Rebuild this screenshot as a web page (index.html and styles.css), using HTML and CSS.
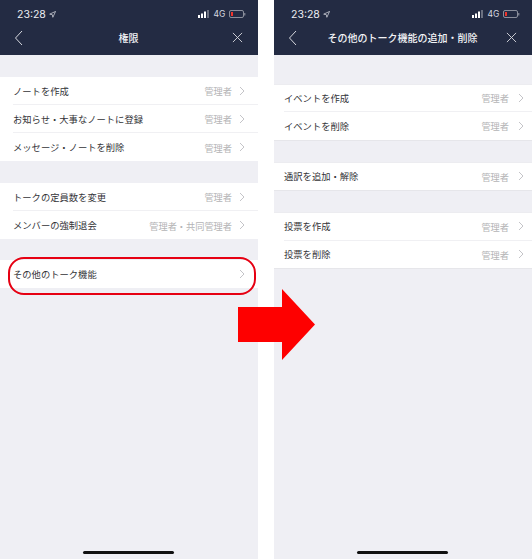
FILE: index.html
```html
<!DOCTYPE html>
<html lang="ja">
<head>
<meta charset="utf-8">
<title>権限</title>
<link rel="stylesheet" href="styles.css">
</head>
<body>
<svg width="0" height="0" class="defs">
  <defs>
    <symbol id="chev" viewBox="0 0 6 10"><path d="M1 1l4 4-4 4" fill="none" stroke="#c4c4c8" stroke-width="1"/></symbol>
    <symbol id="status" viewBox="0 0 48 10">
      <rect x="0" y="6" width="2" height="3" fill="#fff"/>
      <rect x="3" y="4.500" width="2" height="4.500" fill="#fff"/>
      <rect x="6" y="2.500" width="2" height="6.500" fill="#fff"/>
      <rect x="9" y="1" width="2" height="8" fill="#6b7080"/>
      <rect x="31.500" y="1.500" width="14" height="7" rx="1.500" fill="none" stroke="#a5a8b2" stroke-width=".8"/>
      <rect x="33" y="3" width="2" height="4" fill="#f0342c"/>
      <rect x="46.300" y="4" width="1" height="2.500" fill="#9a9da8"/>
    </symbol>
    <symbol id="back" viewBox="0 0 10 16"><path d="M8 1L1.500 8 8 15" fill="none" stroke="#d6d8de" stroke-width="1"/></symbol>
    <symbol id="close" viewBox="0 0 12 12"><path d="M1 1l10 10M11 1L1 11" fill="none" stroke="#d6d8de" stroke-width="1"/></symbol>
  </defs>
</svg>
<main class="stage">
  <section class="phone">
    <header class="top">
      <div class="status">
        <span class="time">23:28 <svg class="loc" viewBox="0 0 8 8"><path d="M7.500.5L.8 3.600l3 .6.6 3z" fill="none" stroke="#dfe1e6" stroke-width=".8"/></svg></span>
        <span class="net"><svg class="bars"><use href="#status"/></svg><span class="g4">4G</span></span>
      </div>
      <div class="nav">
        <svg class="back"><use href="#back"/></svg>
        <h1 class="title">権限</h1>
        <svg class="close"><use href="#close"/></svg>
      </div>
    </header>
    <div class="groups groups-a">
      <ul class="group">
        <li class="row"><span class="label">ノートを作成</span><span class="value">管理者</span><svg class="chev"><use href="#chev"/></svg></li>
        <li class="row"><span class="label">お知らせ・大事なノートに登録</span><span class="value">管理者</span><svg class="chev"><use href="#chev"/></svg></li>
        <li class="row"><span class="label">メッセージ・ノートを削除</span><span class="value">管理者</span><svg class="chev"><use href="#chev"/></svg></li>
      </ul>
      <ul class="group">
        <li class="row"><span class="label">トークの定員数を変更</span><span class="value">管理者</span><svg class="chev"><use href="#chev"/></svg></li>
        <li class="row"><span class="label">メンバーの強制退会</span><span class="value">管理者・共同管理者</span><svg class="chev"><use href="#chev"/></svg></li>
      </ul>
      <ul class="group">
        <li class="row"><span class="label">その他のトーク機能</span><svg class="chev"><use href="#chev"/></svg></li>
      </ul>
    </div>
    <div class="home"></div>
  </section>
  <section class="phone">
    <header class="top">
      <div class="status">
        <span class="time">23:28 <svg class="loc" viewBox="0 0 8 8"><path d="M7.500.5L.8 3.600l3 .6.6 3z" fill="none" stroke="#dfe1e6" stroke-width=".8"/></svg></span>
        <span class="net"><svg class="bars"><use href="#status"/></svg><span class="g4">4G</span></span>
      </div>
      <div class="nav">
        <svg class="back"><use href="#back"/></svg>
        <h1 class="title">その他のトーク機能の追加・削除</h1>
        <svg class="close"><use href="#close"/></svg>
      </div>
    </header>
    <div class="groups groups-b">
      <ul class="group">
        <li class="row"><span class="label">イベントを作成</span><span class="value">管理者</span><svg class="chev"><use href="#chev"/></svg></li>
        <li class="row"><span class="label">イベントを削除</span><span class="value">管理者</span><svg class="chev"><use href="#chev"/></svg></li>
      </ul>
      <ul class="group">
        <li class="row"><span class="label">通訳を追加・解除</span><span class="value">管理者</span><svg class="chev"><use href="#chev"/></svg></li>
      </ul>
      <ul class="group">
        <li class="row"><span class="label">投票を作成</span><span class="value">管理者</span><svg class="chev"><use href="#chev"/></svg></li>
        <li class="row"><span class="label">投票を削除</span><span class="value">管理者</span><svg class="chev"><use href="#chev"/></svg></li>
      </ul>
    </div>
    <div class="home"></div>
  </section>
  <div class="ring"></div>
  <svg class="arrow" viewBox="0 0 77 71"><path d="M0 18h44V0l33 35.500L44 71V53H0z" fill="#fe0000"/></svg>
</main>
</body>
</html>
```
FILE: styles.css
```css
* { box-sizing: border-box; }
html, body { margin: 0; padding: 0; background: #fff; }
body { font-family: "Noto Sans CJK JP", "Noto Sans", sans-serif; }
.defs { position: absolute; }
.stage { position: relative; display: flex; gap: 16px; width: 532px; height: 559px; overflow: hidden; }
.phone { width: 258px; height: 559px; background: #efeff4; display: flex; flex-direction: column; position: relative; }
.top { height: 55px; background: #232b43; color: #fff; display: flex; flex-direction: column; flex: none; }
.status { display: flex; justify-content: space-between; align-items: center; padding: 7px 12px 0 17px; height: 21px; }
.time { font-family: Inter, "Liberation Sans", sans-serif; font-size: 10.500px; color: #eceef2; display: flex; align-items: center; gap: 3px; }
.loc { width: 7px; height: 7px; }
.net { display: flex; align-items: center; position: relative; }
.bars { width: 48px; height: 10px; }
.g4 { position: absolute; left: 15.500px; top: -2px; font-family: Inter, "Liberation Sans", sans-serif; font-size: 8.500px; line-height: 14px; color: #d9dbe1; }
.nav { flex: 1; display: grid; grid-template-columns: 1fr auto 1fr; align-items: center; padding: 0 15px 1px 14px; }
.back { width: 10px; height: 16px; }
.close { width: 11px; height: 11px; justify-self: end; }
.title { margin: 0; font-size: 10px; font-weight: 500; color: #f2f3f6; line-height: 14px; }
.groups { display: flex; flex-direction: column; }
.groups-a { padding-top: 22px; gap: 22px; }
.groups-a .group:last-child { margin-top: -1px; }
.groups-b { padding-top: 29.500px; gap: 23px; }
.group { list-style: none; margin: 0; padding: 0 0 0 13px; background: #fff; }
.row { height: 28px; display: flex; align-items: center; padding-right: 13px; border-bottom: 1px solid #f0f0f3; }
.row:last-child { border-bottom: 0; }
.groups-b .group { box-shadow: 0 1px 0 #e6e6ea, 0 -1px 0 #ececf0; padding-left: 10px; }
.groups-b .row { height: 27.500px; padding-right: 8px; }
.groups-b .chev { margin-left: 9px; }
.label { flex: 1; font-size: 9.300px; line-height: 14px; color: #333337; white-space: nowrap; }
.value { font-size: 9.200px; line-height: 14px; padding-top: 1px; color: #b4b4b6; white-space: nowrap; }
.chev { width: 6px; height: 10px; margin-left: 7px; flex: none; }
.home { position: absolute; left: 83px; bottom: 5px; width: 91px; height: 3px; border-radius: 2px; background: #111; }
.ring { position: absolute; left: 8px; top: 257px; width: 248px; height: 38px; border: 2px solid #e60012; border-radius: 16px; }
.arrow { position: absolute; left: 238px; top: 289px; width: 77px; height: 71px; }
```
